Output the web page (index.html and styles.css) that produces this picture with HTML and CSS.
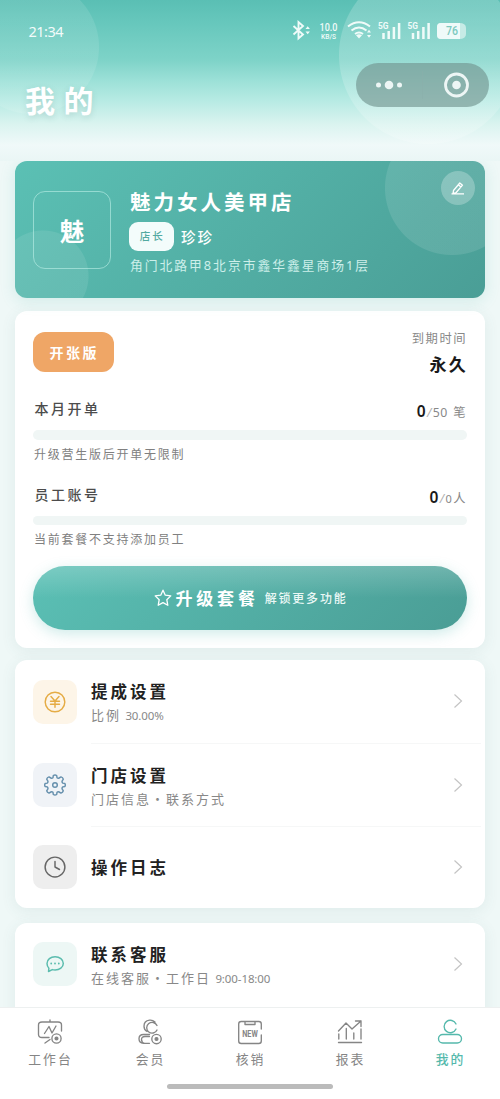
FILE: index.html
```html
<!DOCTYPE html>
<html lang="zh-CN">
<head>
<meta charset="utf-8">
<title>我的</title>
<link rel="stylesheet" href="styles.css">
</head>
<body>
<div class="app">
  <header class="header">
    <div class="status">
      <span class="time">21:34</span>
      <svg class="status-icons" width="178" height="24" viewBox="0 0 178 24" fill="none" stroke="#f0fbf9" stroke-width="1.9">
        <path d="M3.500 7l9.500 8.500-4.500 4V3l4.500 4-9.500 8.500"/>
        <path d="M15.500 10l2.200-2.800L19.900 10zM15.500 12.500l2.200 2.800 2.200-2.800z" fill="#f0fbf9" stroke="none"/>
        <text x="38.500" y="11.500" class="speed" textLength="18" lengthAdjust="spacingAndGlyphs">10.0</text>
        <text x="38.500" y="19.500" class="unit" textLength="15" lengthAdjust="spacingAndGlyphs">KB/S</text>
        <path d="M58 7.500Q69-1 80 7.500M61.500 11.500Q69 5.500 76.500 11.500M65 15Q69 12 73 15" stroke-width="2"/>
        <path d="M66 16.200q3-2 6 0l-3 3.300zM77 13.500l2-2.700 2 2.700zM77 16l2 2.700 2-2.700z" fill="#f0fbf9" stroke="none"/>
        <text x="93" y="9.500" class="gen" textLength="10.500" lengthAdjust="spacingAndGlyphs">5G</text>
        <path d="M93.500 20v-6M98.700 20v-8M103.900 20V8M109.100 20V4" stroke-width="2.500"/>
        <text x="122.500" y="9.500" class="gen" textLength="10.500" lengthAdjust="spacingAndGlyphs">5G</text>
        <path d="M123 20v-6M128.200 20v-8M133.400 20V8M138.600 20V4" stroke-width="2.500"/>
        <path d="M151 4h18q7 0 7 5v6q0 5-7 5h-18q-4 0-4-4V8q0-4 4-4z" fill="#c6ebe6" stroke="none"/>
        <path d="M151 4h19v16h-19q-4 0-4-4V8q0-4 4-4z" fill="#effaf9" stroke="none"/>
        <text x="162" y="16.200" class="battery" textLength="12" lengthAdjust="spacingAndGlyphs">76</text>
      </svg>
    </div>
    <div class="title-row">
      <h1 class="title">我的</h1>
      <div class="capsule">
        <svg width="133" height="44" viewBox="0 0 133 44">
          <g fill="#edf6f5"><circle cx="22.500" cy="22" r="2.500"/><circle cx="33" cy="22" r="4.300"/><circle cx="43.500" cy="22" r="2.500"/><circle cx="100.500" cy="22" r="4.300"/></g>
          <circle cx="100.500" cy="22" r="11" fill="none" stroke="#edf6f5" stroke-width="2.800"/>
          <path d="M66.500 8v28" stroke="#8aaeaa" stroke-width=".5"/>
        </svg>
      </div>
    </div>
  </header>

  <main class="content">
    <section class="card shop">
      <div class="avatar">魅</div>
      <div class="shop-info">
        <div class="shop-name">魅力女人美甲店</div>
        <div class="role-row"><span class="role">店长</span><span class="person">珍珍</span></div>
        <div class="address">角门北路甲8北京市鑫华鑫星商场1层</div>
      </div>
      <div class="edit">
        <svg width="16" height="16" viewBox="0 0 16 16" fill="none" stroke="#fff" stroke-width="1.300" stroke-linejoin="round"><path d="M3.500 10.500L9.800 3l2.700 2.200-6.300 7.300-3.200 1zM8.300 4.800L11 7M1.500 13.800h12.500"/></svg>
      </div>
    </section>

    <section class="card plan">
      <div class="plan-top">
        <span class="badge">开张版</span>
        <div class="expiry"><div class="expiry-label">到期时间</div><div class="expiry-value">永久</div></div>
      </div>
      <div class="quota">
        <div class="quota-row"><span class="quota-label">本月开单</span><span class="quota-value"><b>0</b><i>/</i>50 <em>笔</em></span></div>
        <div class="bar"></div>
        <div class="hint">升级营生版后开单无限制</div>
      </div>
      <div class="quota">
        <div class="quota-row"><span class="quota-label">员工账号</span><span class="quota-value"><b>0</b><i>/</i><small>0</small><em>人</em></span></div>
        <div class="bar"></div>
        <div class="hint">当前套餐不支持添加员工</div>
      </div>
      <div class="upgrade">
        <svg width="18" height="18" viewBox="0 0 18 18" fill="none" stroke="#fff" stroke-width="1.300" stroke-linejoin="round"><path d="M9 1.200l2.300 5 5.500.7-4 3.800 1 5.600L9 13.600l-4.800 2.700 1-5.600-4-3.800 5.500-.7z"/></svg>
        <span class="upgrade-main">升级套餐</span><span class="upgrade-sub">解锁更多功能</span>
      </div>
    </section>

    <section class="card list">
      <div class="item">
        <div class="icon gold"><svg width="22" height="22" viewBox="0 0 22 22"><circle cx="11" cy="11" r="9.800"/><path d="M7 5.500l4 4.500 4-4.500M6.500 10.300h9M6.500 13.300h9M11 10.300v6"/></svg></div>
        <div class="item-body"><div class="item-text"><div class="item-title">提成设置</div><div class="item-sub">比例 <span class="num">30.00%</span></div></div>
        <svg class="chevron" width="10" height="16" viewBox="0 0 10 16"><path d="M1.500 1.500L8.500 8l-7 6.500"/></svg></div>
      </div>
      <div class="item">
        <div class="icon blue"><svg width="22" height="22" viewBox="0 0 22 22"><path d="M9.300 1.500q1.700-1 3.400 0l.3 2.200q1 .8 2.100.3l1.900-1.100q1.800.5 2.300 2.200l-1.200 2q-.3 1.200.7 2l2.100.4q.8 1.500 0 3l-2.100.4q-1 .8-.7 2l1.200 2q-.5 1.700-2.300 2.200l-1.900-1.100q-1.100-.5-2.100.3l-.3 2.200q-1.700 1-3.400 0L9 18.300q-1-.8-2.100-.3L5 19.100q-1.800-.5-2.300-2.200l1.200-2q.3-1.200-.7-2l-2.100-.4q-.8-1.500 0-3l2.100-.4q1-.8.7-2l-1.200-2Q3.200 3.400 5 2.900L6.900 4Q8 4.500 9 3.700z"/><circle cx="11" cy="11" r="2.300"/></svg></div>
        <div class="item-body"><div class="item-text"><div class="item-title">门店设置</div><div class="item-sub">门店信息・联系方式</div></div>
        <svg class="chevron" width="10" height="16" viewBox="0 0 10 16"><path d="M1.500 1.500L8.500 8l-7 6.500"/></svg></div>
      </div>
      <div class="item short">
        <div class="icon gray"><svg width="22" height="22" viewBox="0 0 22 22"><circle cx="11" cy="11" r="9.900"/><path d="M11 5.500V11l4.500 2.500"/></svg></div>
        <div class="item-body"><div class="item-text"><div class="item-title">操作日志</div></div>
        <svg class="chevron" width="10" height="16" viewBox="0 0 10 16"><path d="M1.500 1.500L8.500 8l-7 6.500"/></svg></div>
      </div>
    </section>

    <section class="card list service">
      <div class="item">
        <div class="icon green"><svg width="22" height="22" viewBox="0 0 22 22"><path d="M4.500 18.500l.4-3.300C3.500 13.800 3 12.300 3 10.500c0-4 3.600-6.700 8.100-6.700s8.200 2.800 8.200 6.600-3.700 6.600-8.200 6.600c-1 0-2-.1-2.800-.4z"/><path d="M7.200 10.500h.01M11 10.500h.01M14.800 10.500h.01" stroke-width="1.800"/></svg></div>
        <div class="item-body"><div class="item-text"><div class="item-title">联系客服</div><div class="item-sub">在线客服・工作日 <span class="num">9:00-18:00</span></div></div>
        <svg class="chevron" width="10" height="16" viewBox="0 0 10 16"><path d="M1.500 1.500L8.500 8l-7 6.500"/></svg></div>
      </div>
    </section>
  </main>

  <nav class="tabbar">
    <div class="tabs">
      <div class="tab"><svg width="26" height="26" viewBox="0 0 26 26"><path d="M13 1v2M12 18.500H5q-3.500 0-3.500-3V6q0-3 3.500-3h16q3.500 0 3.500 3v6M7.500 14.500l4.500-7 3 6.500 4-7M8 24l5-3.500"/><circle cx="19.500" cy="19.500" r="4.600"/><circle cx="19.500" cy="19.500" r="1.400" class="dot"/></svg><span>工作台</span></div>
      <div class="tab"><svg width="26" height="26" viewBox="0 0 26 26"><path d="M18 3Q15.500.800 12.500 1.200 7 2 7 7.200q0 3.500 3 5.300M20 6.500A5.400 5.400 0 1 0 20 11M12.500 15.500H6.500q-4.500 0-4.500 4.200t4.500 4.600h6M12.500 17.500H8q-3.500 0-3.500 3t3 3.800"/><circle cx="19.500" cy="20" r="4.700"/><circle cx="19.500" cy="20" r="1.400" class="dot"/></svg><span>会员</span></div>
      <div class="tab"><svg width="26" height="26" viewBox="0 0 26 26"><path d="M24.300 10V5q0-2.500-2.500-2.500H4.200Q1.700 2.500 1.700 5v17q0 2.500 2.500 2.500h17.600q2.500 0 2.500-2.500v-6M8 2.500v3h10v-3"/><text x="13" y="17.500" textLength="15.500" lengthAdjust="spacingAndGlyphs">NEW</text></svg><span>核销</span></div>
      <div class="tab"><svg width="26" height="26" viewBox="0 0 26 26"><path d="M1.500 12l7.500-8 6 6 9-8M18.500 2h5.500v5.500M1.800 20v-5M9.300 20V9.500M16.800 20v-6M24 20V10M1.500 23.500h23"/></svg><span>报表</span></div>
      <div class="tab active"><svg width="26" height="26" viewBox="0 0 26 26"><path d="M19 5A6.200 6.200 0 1 0 19 10"/><rect x="1.500" y="15.500" width="23" height="8.500" rx="4.250"/></svg><span>我的</span></div>
    </div>
    <div class="home"></div>
  </nav>
</div>
</body>
</html>
```
FILE: styles.css
```css
* { box-sizing: border-box; }
body { margin: 0; font-family: "Noto Sans", "Noto Sans CJK SC", sans-serif; }
h1 { margin: 0; }
.app { width: 500px; height: 1099px; display: flex; flex-direction: column; overflow: hidden; background: #eff8f7; }

.header {
  height: 161px; flex: none; padding: 18px 11px 0 25px;
  background:
    radial-gradient(circle at 32px 47px, rgba(255,255,255,.1) 66.5px, transparent 67.5px),
    radial-gradient(circle at 428px 55px, rgba(255,255,255,.19) 88.5px, transparent 89.5px),
    linear-gradient(#5abfb4 0, #68c8bd 25px, #7ed3c8 60px, #9be0d7 80px, #b6eae3 100px, #dbf4f0 125px, #f0f9f9 145px, #eaf6f5 161px);
}
.status { height: 27px; display: flex; justify-content: space-between; align-items: center; padding: 0 21px 0 3.500px; }
.time { color: #f2fbfa; font: 400 14.500px/27px "Noto Sans", sans-serif; letter-spacing: -.5px; }
.status-icons { margin-top: -2px; }
.status-icons text { fill: #f0fbf9; stroke: none; font-family: Roboto, sans-serif; }
.status-icons .speed { font-size: 10px; font-weight: 500; transform: translateX(-9px); }
.status-icons .unit { font-size: 6.500px; font-weight: 500; transform: translateX(-7.500px); }
.status-icons .gen { font-size: 8.500px; font-weight: 700; transform: translateX(-5px); }
.status-icons .battery { font-size: 12px; font-weight: 500; fill: #7cc9bf; transform: translateX(-6px); }
.title-row { display: flex; justify-content: space-between; padding-top: 18px; }
.title { color: #fff; font-size: 30px; line-height: 42px; margin-top: 17px; font-weight: 700; letter-spacing: 8.500px; text-shadow: 0 2px 6px rgba(60,110,105,.2); }
.capsule { width: 133px; height: 44px; border-radius: 22px; background: rgba(112,145,141,.62); }
.capsule svg { display: block; }

.content { flex: 1; min-height: 0; overflow: clip; padding: 0 15px; display: flex; flex-direction: column; }
.card { flex: none; border-radius: 12px; background: #fff; box-shadow: 0 3px 15px rgba(70,115,110,.09); }

.shop {
  height: 136.500px; margin-bottom: 13.500px; display: flex; padding: 30px 10px 0 18px; color: #fff; position: relative;
  background:
    radial-gradient(circle at 437px 27px, rgba(255,255,255,.105) 66.500px, transparent 67.500px),
    radial-gradient(circle at 28px 115px, rgba(255,255,255,.09) 45px, transparent 46px),
    linear-gradient(135deg, #5bc0b4, #4a9e96);
  box-shadow: 0 3px 15px rgba(77,182,172,.18);
}
.avatar { width: 78px; height: 78px; border: 1.500px solid rgba(190,240,231,.6); border-radius: 12px; font-size: 24.500px; line-height: 80px; text-align: center; font-weight: 700; flex: none; }
.shop-info { margin-left: 19px; flex: 1; }
.shop-name { font-size: 20.500px; line-height: 28px; margin-top: -3px; font-weight: 700; letter-spacing: 3px; }
.role-row { display: flex; align-items: center; height: 30px; margin: 5px 0 0 -1px; }
.role { width: 44.500px; height: 29px; border-radius: 9px; background: #f3fcfb; color: #52aaa1; font-size: 10.500px; font-weight: 500; line-height: 29px; letter-spacing: 2px; text-align: center; padding-left: 2px; }
.person { margin-left: 7.500px; font-size: 14.500px; font-weight: 500; letter-spacing: 2px; }
.address { margin-top: 3.500px; font-size: 12.800px; line-height: 20px; letter-spacing: 1.970px; color: #cdefea; white-space: nowrap; }
.edit { position: absolute; right: 10px; top: 10px; width: 34px; height: 34px; border-radius: 50%; background: rgba(255,255,255,.25); display: grid; place-items: center; }

.plan { height: 337px; margin-bottom: 12px; padding: 21px 18px 0; }
.plan-top { display: flex; justify-content: space-between; height: 67px; }
.badge { width: 80.500px; height: 40px; border-radius: 12px; background: #efa666; color: #fff; font-size: 14px; font-weight: 700; line-height: 41px; letter-spacing: 2.500px; text-align: center; padding-left: 2px; }
.expiry { text-align: right; margin-top: -3px; }
.expiry-label { font-size: 12.300px; line-height: 20px; color: #888; letter-spacing: 1.500px; }
.expiry-value { font-size: 17px; line-height: 26px; margin: 3px -1px 0 0; font-weight: 700; color: #191919; letter-spacing: 2.300px; }
.quota { height: 85.500px; }
.quota-row { display: flex; justify-content: space-between; height: 31px; line-height: 20px; padding: 0 0 0 1.500px; }
.quota-label { font-size: 14px; font-weight: 500; color: #4c4c4c; letter-spacing: 2.500px; }
.quota-value { color: #888; font-size: 12.300px; line-height: 24px; letter-spacing: .4px; white-space: pre; margin-right: 1px; }
.quota-value b { color: #191919; font-size: 15.500px; font-weight: 600; }
.quota-value small { font-size: 11px; }
.quota-value i { color: #b0b0b0; padding: 0 1px; }
.quota-value em { font-style: normal; margin-left: 2px; }
.quota-value small + em { margin-left: 1px; }
.bar { height: 9.500px; border-radius: 5px; background: #f0f6f5; }
.hint { font-size: 12px; line-height: 18px; padding: 6px 0 0 1px; color: #808080; letter-spacing: 1.750px; }
.upgrade {
  height: 63.500px; margin-top: -4px; border-radius: 32px; color: #fff; display: flex; align-items: center; justify-content: center; padding-left: 2px;
  background: linear-gradient(rgba(255,255,255,.2), rgba(255,255,255,0) 50%), linear-gradient(135deg, #5bc0b5, #4a9d95);
  box-shadow: 0 4px 14px rgba(77,182,172,.27);
}
.upgrade-main { font-size: 17px; font-weight: 700; letter-spacing: 3.800px; margin-left: 3px; }
.upgrade-sub { font-size: 12px; font-weight: 500; letter-spacing: 1.800px; margin-left: 6px; color: #eaf8f6; }

.list { padding-left: 18px; margin-bottom: 15.500px; }
.item { display: flex; align-items: center; height: 83.500px; }
.item.short { height: 80.500px; }
.service { height: 110px; }
.service .item { height: 82px; }
.icon { width: 44px; height: 44px; border-radius: 10px; display: grid; place-items: center; flex: none; }
.icon svg { fill: none; stroke-width: 1.450; stroke-linejoin: round; stroke-linecap: round; }
.gold { background: #fdf5e8; } .gold svg { stroke: #e5ac45; }
.blue { background: #f0f3f7; } .blue svg { stroke: #6690ad; }
.gray { background: #eee; } .gray svg { stroke: #666; }
.green { background: #edf7f5; } .green svg { stroke: #5bbcae; }
.item-body { flex: 1; height: 100%; margin: 0 4px 0 14px; padding-right: 18px; display: flex; align-items: center; justify-content: space-between; border-bottom: 1px solid #f6f7f7; }
.short .item-body, .service .item-body { border: 0; }
.item-title { font-size: 16.500px; font-weight: 700; line-height: 24px; margin-top: 1px; color: #222; letter-spacing: 3px; }
.short .item-title { margin-top: 2px; }
.item-sub { font-size: 13px; line-height: 20px; margin: 1px 0 -2px; color: #888; letter-spacing: 2px; }
.num { font-size: 11.500px; letter-spacing: -.1px; margin-left: -1px; }
.chevron { fill: none; stroke: #c4c4c4; stroke-width: 1.200; }

.tabbar { flex: none; height: 92.500px; background: #fff; border-top: 1.500px solid #edf0f0; position: relative; }
.tabs { display: grid; grid-template-columns: repeat(5, 1fr); padding-top: 11px; }
.tab { display: flex; flex-direction: column; align-items: center; color: #858585; font-size: 12.800px; line-height: 20px; }
.tab span { margin-top: 4.500px; letter-spacing: 2px; padding-left: 1px; }
.tab svg { fill: none; stroke: currentColor; stroke-width: 1.350; stroke-linecap: round; stroke-linejoin: round; }
.tab .dot { fill: currentColor; }
.tab text { fill: currentColor; stroke: none; font: 700 9px Roboto, sans-serif; transform: translateX(-7.750px); }
.active { color: #55b9ac; font-weight: 500; }
.home { width: 166px; height: 5px; border-radius: 3px; background: #bbb; margin: 14.500px auto 0; }
```
